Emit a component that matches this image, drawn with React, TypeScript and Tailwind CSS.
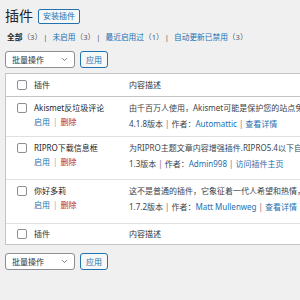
import { ChevronDown } from 'lucide-react'

const plugins = [
    {
        name: 'Akismet反垃圾评论',
        desc: '由千百万人使用，Akismet可能是保护您的站点免受垃圾评论的最佳方案。',
        version: '4.1.8版本',
        author: 'Automattic',
        link: '查看详情',
        h: 'h-[40px]',
    },
    {
        name: 'RIPRO下载信息框',
        desc: '为RIPRO主题文章内容增强插件.RIPRO5.4以下自行添加下载信息框',
        version: '1.3版本',
        author: 'Admin998',
        link: '访问插件主页',
        h: 'h-[43px]',
    },
    {
        name: '你好多莉',
        desc: '这不是普通的插件，它象征着一代人希望和热情，浓缩成Louis Armstrong的四个字',
        version: '1.7.2版本',
        author: 'Matt Mullenweg',
        link: '查看详情',
        h: 'h-[44px]',
    },
]

function Checkbox() {
    return <div className="w-[10px] h-[10px] shrink-0 rounded-[2px] border border-[#8c8f94] bg-white"></div>
}

function BulkBar() {
    return (
        <div className="flex items-center gap-[5px] pl-[5px]">
            <div className="w-[70px] h-[17px] flex items-center justify-between pl-[6px] pr-[5px] bg-white border border-[#8c8f94] rounded-[3px] text-[8px] text-[#2c3338]">
                <span>批量操作</span>
                <ChevronDown className="w-[9px] h-[9px] text-[#50575e]" strokeWidth={2} />
            </div>
            <div className="w-[28px] h-[17px] flex items-center justify-center bg-[#f6f7f7] border border-[#2271b1] rounded-[3px] text-[8px] text-[#2271b1]">
                应用
            </div>
        </div>
    )
}

function HeadRow({ h }: { h: string }) {
    return (
        <div className={`flex items-center ${h} text-[8px] text-[#2c3338]`}>
            <div className="w-[28px] flex justify-center pl-[4px]">
                <Checkbox />
            </div>
            <div className="w-[95px]">插件</div>
            <div className="flex-1">内容描述</div>
        </div>
    )
}

export default function App() {
    return (
        <div className="w-[300px] h-[300px] overflow-hidden bg-[#f0f0f1] font-['Noto_Sans','Noto_Sans_CJK_SC',sans-serif] leading-none">
            {/* Title */}
            <div className="flex items-center gap-[5px] pl-[5px] pt-[8px] h-[24px]">
                <h1 className="text-[14px] text-[#1d2327]">插件</h1>
                <div className="h-[15px] px-[4px] flex items-center bg-[#f6f7f7] border border-[#2271b1] rounded-[2px] text-[8px] text-[#2271b1]">
                    安装插件
                </div>
            </div>

            {/* Filters */}
            <div className="flex items-center pl-[7px] mt-[9px] h-[10px] text-[7.7px] text-[#50575e] whitespace-nowrap">
                <span className="font-bold text-[#1d2327]">全部</span>
                <span>（3）</span>
                <span className="px-[1px]">|</span>
                <span className="text-[#2271b1] ml-[4px]">未启用</span>
                <span>（3）</span>
                <span className="px-[1px]">|</span>
                <span className="text-[#2271b1] ml-[4px]">最近启用过</span>
                <span>（1）</span>
                <span className="px-[1px]">|</span>
                <span className="text-[#2271b1] ml-[4px]">自动更新已禁用</span>
                <span>（3）</span>
            </div>

            <div className="mt-[8px]">
                <BulkBar />
            </div>

            {/* Table */}
            <div className="ml-[5px] mt-[5px] w-[420px] bg-white border border-[#c3c4c7]">
                <div className="border-b border-[#c3c4c7]">
                    <HeadRow h="h-[22px]" />
                </div>
                {plugins.map((p) => (
                    <div key={p.name} className={`flex ${p.h} border-b border-[#e0e0e0]`}>
                        <div className="w-[28px] flex justify-center pl-[4px] pt-[6px]">
                            <Checkbox />
                        </div>
                        <div className="w-[95px] pt-[7px]">
                            <div className="text-[8px] text-[#1d2327] whitespace-nowrap">{p.name}</div>
                            <div className="mt-[6px] text-[8px] whitespace-nowrap">
                                <span className="text-[#2271b1]">启用</span>
                                <span className="text-[#a7aaad] px-[3px]">|</span>
                                <span className="text-[#b32d2e]">删除</span>
                            </div>
                        </div>
                        <div className="flex-1 pt-[7px] text-[8px] text-[#3c434a] whitespace-nowrap">
                            <div>{p.desc}</div>
                            <div className="mt-[8px]">
                                {p.version}
                                <span className="px-[2px] text-[#8a6d6d]">|</span>
                                作者：<span className="text-[#2271b1]">{p.author}</span>
                                <span className="px-[2px] text-[#8a6d6d]">|</span>
                                <span className="text-[#2271b1]">{p.link}</span>
                            </div>
                        </div>
                    </div>
                ))}
                <HeadRow h="h-[20px]" />
            </div>

            <div className="mt-[8px]">
                <BulkBar />
            </div>
        </div>
    )
}
